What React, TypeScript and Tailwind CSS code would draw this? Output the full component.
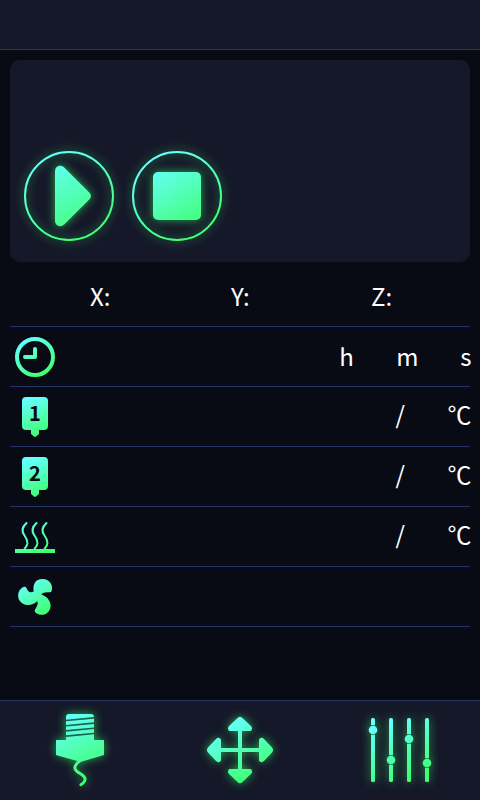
import type { ReactNode } from "react";

const glow = "drop-shadow-[0_0_5px_rgba(51,255,102,0.65)]";

type IconProps = {
  id: string;
  box: string;
  className: string;
  from: [number, number];
  to: [number, number];
  children: ReactNode;
};

function Icon({ id, box, className, from, to, children }: IconProps) {
  return (
    <svg viewBox={box} className={`block shrink-0 overflow-visible ${className}`}>
      <defs>
        <linearGradient id={id} gradientUnits="userSpaceOnUse" x1={from[0]} y1={from[1]} x2={to[0]} y2={to[1]}>
          <stop offset="0" stopColor="#66ffff" />
          <stop offset="1" stopColor="#40ff73" />
        </linearGradient>
      </defs>
      {children}
    </svg>
  );
}

function PlayButton() {
  return (
    <button aria-label="Play">
      <Icon id="play" box="0 0 90 90" className={`size-[90px] ${glow}`} from={[22, 5]} to={[58, 85]}>
        <circle cx="45" cy="45" r="44" fill="none" stroke="url(#play)" strokeWidth="2" />
        <path
          d="M31 20.5C31 15 36.500 13 40.500 16.700L64.800 41C67.600 43.800 67.600 46.200 64.800 49L40.500 73.300C36.500 77 31 75 31 69.500Z"
          fill="url(#play)"
        />
      </Icon>
    </button>
  );
}

function StopButton() {
  return (
    <button aria-label="Stop">
      <Icon id="stop" box="0 0 90 90" className={`size-[90px] ${glow}`} from={[22, 12]} to={[62, 78]}>
        <circle cx="45" cy="45" r="44" fill="none" stroke="url(#stop)" strokeWidth="2" />
        <rect x="21" y="21" width="48" height="48" rx="5" fill="url(#stop)" />
      </Icon>
    </button>
  );
}

function ClockIcon() {
  return (
    <Icon id="clock" box="0 0 40 40" className="size-10" from={[10, 3]} to={[29, 37]}>
      <circle cx="20" cy="20" r="18" fill="none" stroke="url(#clock)" strokeWidth="4" />
      <path d="M20 12V20H10" fill="none" stroke="url(#clock)" strokeWidth="4" strokeLinecap="round" strokeLinejoin="round" />
    </Icon>
  );
}

function NozzleIcon({ n }: { n: string }) {
  const id = `nozzle${n}`;
  return (
    <Icon id={id} box="0 0 40 40" className="size-10" from={[12, 2]} to={[27, 38]}>
      <path
        d="M11 0H29Q33 0 33 4V29Q33 33 29 33H24V37L21 39.600Q20 40.300 19 39.600L16 37V33H11Q7 33 7 29V4Q7 0 11 0Z"
        fill={`url(#${id})`}
      />
      <text x="20" y="24" textAnchor="middle" className="fill-[#080b14] font-['Noto_Sans_CJK_SC',sans-serif] text-[20px] font-bold">
        {n}
      </text>
    </Icon>
  );
}

function BedIcon() {
  return (
    <Icon id="bed" box="0 0 40 40" className="size-10" from={[10, 3]} to={[26, 36]}>
      <path d="M0 32H40V36H0Z" fill="url(#bed)" />
      <g fill="none" stroke="url(#bed)" strokeWidth="2" strokeLinecap="round">
        <path d="M11.500 6C7 10 6.500 14.500 9.500 18.500S14.500 27 9.500 32" />
        <path d="M21.500 6C17 10 16.500 14.500 19.500 18.500S24.500 27 19.500 32" />
        <path d="M31.500 6C27 10 26.500 14.500 29.500 18.500S34.500 27 29.500 32" />
      </g>
    </Icon>
  );
}

function FanIcon() {
  return (
    <Icon id="fan" box="0 0 40 40" className="size-10" from={[9, 4]} to={[29, 36]}>
      <path
        d="M18.700 14.500C17.700 7.500 20 2 27.500 2C34.500 2 38.300 8 36.800 13.500C36.300 15 35.500 15.300 34 15.300C30 15.100 27.500 15.800 26.300 17.500C33 19.500 37 26 35.300 31.300C33 38.500 25 39.500 20.500 35.500C19.500 34.500 19.500 33.500 20.200 32.300C22.500 28.500 23.500 26 22 24.200C18 28.500 11 29.300 6.500 25.700C1.500 21.500 2.300 14 7.300 10.400C9 9.300 10.800 9.300 11.500 11C13 15 15.200 16.200 18.700 14.500Z"
        fill="url(#fan)"
      />
    </Icon>
  );
}

function ExtruderIcon() {
  return (
    <Icon id="extruder" box="0 0 48 74" className={`mt-0.5 h-[74px] w-12 ${glow}`} from={[10, 2]} to={[36, 58]}>
      <path
        d="M13 0H35Q38 0 38 3V26H48V41L26 47.500H23L0 41V26H10V3Q10 0 13 0Z"
        fill="url(#extruder)"
      />
      <path d="M10 6.500L38 3.900M10 11.700L38 9.100M10 16.900L38 14.300M10 22.100L38 19.500" stroke="#14664c" strokeWidth="1.600" />
      <path
        d="M24.500 46.500C19 50 17 54 21 57.500C25 60.500 30 62 29 66C28.500 68 27 69.500 24.800 70.700"
        fill="none"
        stroke="url(#extruder)"
        strokeWidth="2.900"
        strokeLinecap="round"
      />
    </Icon>
  );
}

function MoveIcon() {
  return (
    <Icon id="move" box="0 0 68 68" className={`size-[68px] ${glow}`} from={[20, 6]} to={[48, 62]}>
      <g fill="url(#move)">
        <path d="M32 12H36V32H56V36H36V56H32V36H12V32H32Z" />
        <path d="M31.800 1.700Q34 0 36.200 1.700L45 10Q47 12 45.500 14.200Q45 15 44 15H24Q23 15 22.500 14.200Q21 12 23 10Z" />
        <path d="M31.800 66.300Q34 68 36.200 66.300L45 58Q47 56 45.500 53.800Q45 53 44 53H24Q23 53 22.500 53.800Q21 56 23 58Z" />
        <path d="M1.700 31.800Q0 34 1.700 36.200L10 45Q12 47 14.200 45.500Q15 45 15 44V24Q15 23 14.200 22.500Q12 21 10 23Z" />
        <path d="M66.300 31.800Q68 34 66.300 36.200L58 45Q56 47 53.800 45.500Q53 45 53 44V24Q53 23 53.800 22.500Q56 21 58 23Z" />
      </g>
    </Icon>
  );
}

const sliders = [
  { x: 5, knob: 12 },
  { x: 23, knob: 42 },
  { x: 41, knob: 21 },
  { x: 59, knob: 45 },
];

function SlidersIcon() {
  return (
    <Icon id="sliders" box="0 0 64 64" className={`size-16 ${glow}`} from={[20, 4]} to={[44, 60]}>
      {sliders.map(({ x, knob }) => (
        <g key={x}>
          <rect x={x - 2} y="0" width="4" height="64" rx="1.500" fill="url(#sliders)" />
          <rect x={x - 2} y={knob - 5} width="4" height="10" fill="#1f8a60" />
          <circle cx={x} cy={knob} r="4.300" fill="url(#sliders)" />
        </g>
      ))}
    </Icon>
  );
}

function Row({ icon, children }: { icon: ReactNode; children?: ReactNode }) {
  return (
    <div className="flex h-[60px] items-center justify-between border-b border-[#263363] pl-[5px]">
      {icon}
      {children}
    </div>
  );
}

function Temperature() {
  return (
    <div className="-mr-[1.500px] flex items-center pb-1.5 leading-none">
      <span className="w-[52px]">/</span>
      <span className="w-6 whitespace-nowrap">℃</span>
    </div>
  );
}

export default function App() {
  return (
    <div className="flex h-[800px] w-[480px] flex-col overflow-hidden bg-[#080b14] font-['Noto_Sans_CJK_SC',sans-serif] text-2xl text-white">
      <header className="h-[50px] shrink-0 border-b border-[#263363] bg-[#151829]" />
      <main className="flex flex-1 flex-col px-2.5 pt-2.5">
        <section className="flex h-[202px] items-end gap-[18px] rounded-[10px] bg-[#151829] px-3.5 pb-[21px]">
          <PlayButton />
          <StopButton />
        </section>
        <div className="flex h-[65px] items-center border-b border-[#263363] pt-1 pl-20 leading-none">
          <span className="w-[141px]">X:</span>
          <span className="w-[140px]">Y:</span>
          <span>Z:</span>
        </div>
        <Row icon={<ClockIcon />}>
          <div className="-mr-[1.500px] flex pb-0.5 leading-none">
            <span className="w-[57px]">h</span>
            <span className="w-[64px]">m</span>
            <span>s</span>
          </div>
        </Row>
        <Row icon={<NozzleIcon n="1" />}><Temperature /></Row>
        <Row icon={<NozzleIcon n="2" />}><Temperature /></Row>
        <Row icon={<BedIcon />}><Temperature /></Row>
        <Row icon={<FanIcon />} />
      </main>
      <nav className="grid h-[100px] shrink-0 grid-cols-3 items-center justify-items-center border-t border-[#263363] bg-[#151829] pb-px">
        <button aria-label="Extruder"><ExtruderIcon /></button>
        <button aria-label="Move"><MoveIcon /></button>
        <button aria-label="Settings"><SlidersIcon /></button>
      </nav>
    </div>
  );
}
